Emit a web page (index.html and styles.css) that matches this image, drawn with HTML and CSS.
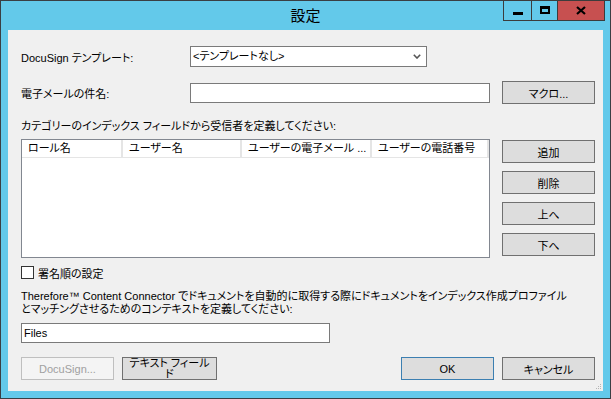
FILE: index.html
```html
<!DOCTYPE html>
<html lang="ja">
<head>
    <meta charset="UTF-8">
    <title>設定</title>
    <link rel="stylesheet" href="styles.css">
</head>
<body>
    <!-- Settings dialog -->
    <div class="window">
        <div class="titlebar">
            <span class="title">設定</span>
        </div>
        <div class="caption-buttons">
            <div class="caption-btn btn-min"><span class="min-bar"></span></div>
            <div class="caption-btn btn-max"><span class="max-box"></span></div>
            <div class="caption-btn btn-close">
                <svg width="10" height="9" viewBox="0 0 10 9">
                    <path d="M1 1 L9 8 M9 1 L1 8" stroke="#000" stroke-width="2.2" fill="none"/>
                </svg>
            </div>
        </div>

        <div class="client">
            <!-- Template -->
            <div class="row row-template">
                <span class="field-label">DocuSign テンプレート:</span>
                <div class="combo">
                    <span class="combo-text">&lt;テンプレートなし&gt;</span>
                    <svg class="combo-arrow" width="8" height="5" viewBox="0 0 8 5">
                        <path d="M0.8 0.8 L4 4 L7.2 0.8" stroke="#555" stroke-width="1.6" fill="none"/>
                    </svg>
                </div>
            </div>

            <!-- Subject -->
            <div class="row row-subject">
                <span class="field-label">電子メールの件名:</span>
                <div class="textbox subject-box"></div>
                <button class="button">マクロ...</button>
            </div>

            <div class="section-label">カテゴリーのインデックス フィールドから受信者を定義してください:</div>

            <!-- Recipients list -->
            <div class="recipients">
                <div class="listview">
                    <div class="lv-header">
                        <div class="lv-col col-role">ロール名</div>
                        <div class="lv-col col-user">ユーザー名</div>
                        <div class="lv-col col-mail">ユーザーの電子メール ...</div>
                        <div class="lv-col col-phone">ユーザーの電話番号</div>
                    </div>
                </div>
                <div class="side-buttons">
                    <button class="button">追加</button>
                    <button class="button">削除</button>
                    <button class="button">上へ</button>
                    <button class="button">下へ</button>
                </div>
            </div>

            <label class="check-row">
                <span class="checkbox"></span>
                <span>署名順の設定</span>
            </label>

            <p class="context-text">Therefore™ Content Connector でドキュメントを自動的に取得する際にドキュメントをインデックス作成プロファイル<br>とマッチングさせるためのコンテキストを定義してください:</p>

            <div class="textbox files-box">Files</div>

            <!-- Footer buttons -->
            <div class="footer">
                <div class="button-group">
                    <button class="button disabled">DocuSign...</button>
                    <button class="button text-field-btn">テキスト フィールド</button>
                </div>
                <div class="button-group">
                    <button class="button default">OK</button>
                    <button class="button">キャンセル</button>
                </div>
            </div>

            <svg class="grip" width="7" height="7" viewBox="0 0 7 7">
                <rect x="5" y="1" width="1" height="1" fill="#b5b5b5"/>
                <rect x="3" y="3" width="1" height="1" fill="#b5b5b5"/>
                <rect x="5" y="3" width="1" height="1" fill="#b5b5b5"/>
                <rect x="1" y="5" width="1" height="1" fill="#b5b5b5"/>
                <rect x="3" y="5" width="1" height="1" fill="#b5b5b5"/>
                <rect x="5" y="5" width="1" height="1" fill="#b5b5b5"/>
            </svg>
        </div>
    </div>
</body>
</html>
```

FILE: styles.css
```css
/* Color Palette */
:root {
    --frame-color: #63c9ea;
    --frame-border: #3a3f44;
    --client-bg: #f0f0f0;
    --button-bg: #dddddd;
    --button-border: #707070;
    --field-border: #7a7a7a;
    --text-color: #000000;
}

body {
    margin: 0;
    padding: 0;
    font-family: "Liberation Sans", "Noto Sans CJK JP", sans-serif;
    font-size: 11px;
    font-feature-settings: "palt";
    color: var(--text-color);
}

/* Window frame */
.window {
    position: relative;
    width: 611px;
    height: 399px;
    box-sizing: border-box;
    border: 1px solid var(--frame-border);
    background-color: var(--frame-color);
    padding: 0 7px 7px;
    display: flex;
    flex-direction: column;
}

.titlebar {
    height: 29px;
    line-height: 29px;
    text-align: center;
}

.title {
    font-size: 15px;
}

/* Min / max / close */
.caption-buttons {
    position: absolute;
    top: -1px;
    right: 5px;
    display: flex;
}

.caption-btn {
    height: 21px;
    box-sizing: border-box;
    border: 1px solid #3c3c3c;
    display: flex;
    justify-content: center;
    align-items: center;
}

.btn-min {
    width: 29px;
}

.btn-max {
    width: 27px;
    margin-left: -1px;
}

.btn-close {
    width: 48px;
    margin-left: -1px;
    background-color: #c75050;
}

.min-bar {
    width: 10px;
    height: 3px;
    background: #000;
    margin-top: 5px;
}

.max-box {
    width: 10px;
    height: 8px;
    box-sizing: border-box;
    border: 2px solid #000;
    border-top-width: 3px;
    margin-top: -1px;
}

/* Client area */
.client {
    position: relative;
    flex: 1;
    background-color: var(--client-bg);
    padding: 16px 8px 0 13px;
}

.row {
    display: flex;
    align-items: center;
}

.field-label {
    width: 169px;
}

.row-template {
    height: 21px;
}

.combo {
    width: 237px;
    height: 21px;
    box-sizing: border-box;
    border: 1px solid var(--field-border);
    background: #fff;
    display: flex;
    align-items: center;
    justify-content: space-between;
    padding: 0 5px 0 2px;
}

.combo-text {
    line-height: 19px;
}

.row-subject {
    margin-top: 14px;
    height: 23px;
}

.textbox {
    box-sizing: border-box;
    border: 1px solid var(--field-border);
    background: #fff;
    height: 20px;
    line-height: 18px;
    padding-left: 2px;
}

.subject-box {
    width: 300px;
    margin-right: 12px;
}

/* Buttons */
.button {
    width: 93px;
    height: 23px;
    box-sizing: border-box;
    background-color: var(--button-bg);
    border: 1px solid var(--button-border);
    font-family: inherit;
    font-size: 11px;
    font-feature-settings: "palt";
    color: var(--text-color);
    padding: 0;
    margin: 0;
}

.button.default {
    border-color: #3c7fb1;
}

.button.disabled {
    background-color: #f4f4f4;
    border-color: #bfbfbf;
    color: #a0a0a0;
}

.text-field-btn {
    width: 95px;
    line-height: 11px;
    padding: 0 6px 3px;
}

.button-group {
    display: flex;
    gap: 8px;
}

.section-label {
    margin-top: 15px;
    line-height: 15px;
}

/* Recipients list */
.recipients {
    margin-top: 5px;
    display: flex;
    align-items: flex-start;
    gap: 12px;
}

.listview {
    width: 469px;
    height: 119px;
    box-sizing: border-box;
    border: 1px solid #828790;
    background: #fff;
}

.lv-header {
    display: flex;
    height: 17px;
    border-bottom: 1px solid #e5e5e5;
}

.lv-col {
    box-sizing: border-box;
    border-right: 2px solid #e5e5e5;
    line-height: 17px;
    padding-left: 6px;
    white-space: nowrap;
    overflow: hidden;
}

.col-role {
    width: 101px;
}

.col-user {
    width: 119px;
}

.col-mail {
    width: 130px;
}

.col-phone {
    flex: 1;
}

.side-buttons {
    display: flex;
    flex-direction: column;
    gap: 8px;
    padding-top: 1px;
}

/* Signing order */
.check-row {
    margin-top: 8px;
    display: flex;
    align-items: center;
    gap: 4px;
    height: 13px;
}

.checkbox {
    width: 13px;
    height: 13px;
    box-sizing: border-box;
    border: 1px solid #333;
    background: #fff;
}

.context-text {
    margin: 11px 0 0;
    line-height: 13px;
}

.files-box {
    margin-top: 7px;
    width: 309px;
}

.footer {
    margin-top: 14px;
    display: flex;
    justify-content: space-between;
}

.grip {
    position: absolute;
    right: 1px;
    bottom: 1px;
}
```
